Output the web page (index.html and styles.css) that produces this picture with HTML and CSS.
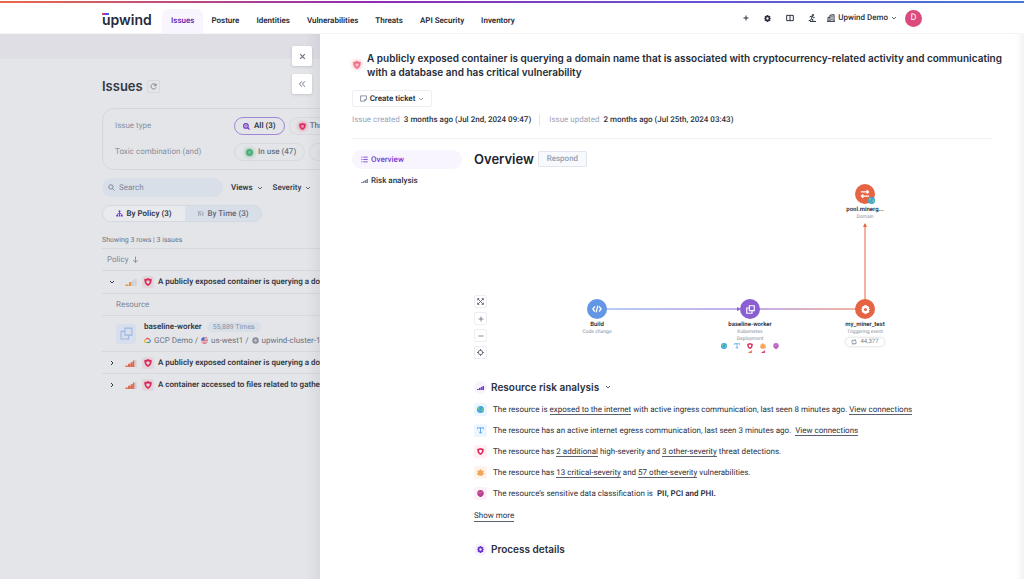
FILE: index.html
```html
<!DOCTYPE html>
<html lang="en">
<head>
<meta charset="utf-8">
<meta name="viewport" content="width=device-width, initial-scale=1">
<title>Upwind – Issues</title>
<link rel="stylesheet" href="styles.css">
</head>
<body>
<svg class="sprite" aria-hidden="true">
  <symbol id="chevron-down" viewBox="0 0 12 12"><path d="M2 4l4 4 4-4" class="line"/></symbol>
  <symbol id="chevron-right" viewBox="0 0 12 12"><path d="M4 2l4 4-4 4" class="line"/></symbol>
  <symbol id="chevrons-left" viewBox="0 0 12 12"><path d="M6 2L2 6l4 4M10.500 2l-4 4 4 4" class="line"/></symbol>
  <symbol id="close" viewBox="0 0 12 12"><path d="M2 2l8 8M10 2l-8 8" class="line"/></symbol>
  <symbol id="plus" viewBox="0 0 12 12"><path d="M6 1v10M1 6h10" class="line"/></symbol>
  <symbol id="minus" viewBox="0 0 12 12"><path d="M1 6h10" class="line"/></symbol>
  <symbol id="refresh" viewBox="0 0 12 12"><path d="M10 3.500A4.500 4.500 0 1 0 10.400 7.500M10.500 1v3.500H7" class="line"/></symbol>
  <symbol id="cycle" viewBox="0 0 12 12"><path d="M2 7.500V2.500h7M10 4.500v5H3M7.500 1l2 1.500-2 1.500M4.500 8l-2 1.500 2 1.500" class="line"/></symbol>
  <symbol id="gear" viewBox="0 0 12 12"><path fill="currentColor" fill-rule="evenodd" d="M4.700 0h2.600l.4 1.700 1.600-.5L11.200 3.200 10.300 4.600 12 6l-1.700 1.400.9 1.500-1.900 2-1.600-.6L7.300 12H4.700l-.4-1.700-1.600.5L.8 8.800l.9-1.400L0 6l1.700-1.400L.8 3.200l1.900-2 1.600.5zM6 4a2 2 0 1 0 0 4 2 2 0 0 0 0-4z"/></symbol>
  <symbol id="book" viewBox="0 0 12 12"><path d="M1 2h10v8H1zM6 2v8" class="line"/></symbol>
  <symbol id="runner" viewBox="0 0 12 12"><circle cx="7.500" cy="1.500" r="1.500" fill="currentColor"/><path d="M2.500 4.500l2-1.200h2.500l1 2.200h2M6.500 3.500L5 7l2.500 1.500L7 11M5 7l-1 2.500L1 10M3 11.200h9" class="line"/></symbol>
  <symbol id="building" viewBox="0 0 12 12"><path d="M4.500 11V1.800L10.500 1v10M1.500 11V5h3M0 11h12M6.500 3.500h2M6.500 6h2M6.500 8.500h2" class="line"/></symbol>
  <symbol id="shield" viewBox="0 0 12 12"><path fill="currentColor" fill-rule="evenodd" d="M6 0C7.700 1.100 9.600 1.400 11.500 1.300 11.900 6 10.500 10 6 12 1.500 10 .1 6 .5 1.300 2.400 1.400 4.300 1.100 6 0zM3.400 4C3.300 6.600 4.200 8 6 9c1.800-1 2.700-2.400 2.600-5C7.700 4 6.900 3.700 6 3.200 5.100 3.700 4.300 4 3.400 4z"/></symbol>
  <symbol id="note" viewBox="0 0 12 12"><path d="M1 1.500h10v6L8 10.500H1zM11 7.500H8v3" class="line"/></symbol>
  <symbol id="list" viewBox="0 0 12 12"><path d="M.5 2h2M4 2h7.500M.5 6h2M4 6h7.500M.5 10h2M4 10h7.500" class="line"/></symbol>
  <symbol id="bars" viewBox="0 0 14 10"><path fill="currentColor" d="M0 8h3v2H0zM3.700 6h3v4h-3zM7.400 4h3v6h-3zM11 2h3v8h-3z"/></symbol>
  <symbol id="signal-high" viewBox="0 0 14 10"><path fill="currentColor" d="M0 8h3v2H0zM3.300 6h3v4h-3zM6.600 4h2.500v6H6.600zM9.300 2h2v8h-2z"/><path fill="#cdd0d8" d="M11.800 1H14v9h-2.200z"/></symbol>
  <symbol id="signal-mid" viewBox="0 0 14 10"><path fill="currentColor" d="M0 8h4v2H0zM4.500 5h3v5h-3z"/><path fill="#cdd0d8" d="M8.300 3H11v7H8.300zM11.600 1H14v9h-2.400z"/></symbol>
  <symbol id="search" viewBox="0 0 12 12"><circle cx="5" cy="5" r="3.700" class="line"/><path d="M8 8l3.300 3.300" class="line"/></symbol>
  <symbol id="search-all" viewBox="0 0 12 12"><circle cx="5" cy="5" r="3.900" class="line"/><path d="M8 8l3.300 3.300" class="line"/><circle cx="5" cy="5" r="1.400" fill="currentColor"/></symbol>
  <symbol id="ring" viewBox="0 0 12 12"><circle cx="6" cy="6" r="4" fill="none" stroke="currentColor" stroke-width="4"/></symbol>
  <symbol id="tree" viewBox="0 0 12 12"><path d="M6 2v7M2 9V7.500L6 5l4 2.500V9" class="line"/><circle cx="6" cy="2.200" r="1.700" fill="currentColor"/><path fill="currentColor" d="M.5 8.500h3V11h-3zM4.700 8.500h2.600V11H4.700zM8.500 8.500h3V11h-3z"/></symbol>
  <symbol id="time" viewBox="0 0 12 12"><path d="M1 2l2 2v6M5 1.500v4l2 4M8 2l2 2v6" class="line"/></symbol>
  <symbol id="arrow-down" viewBox="0 0 12 12"><path d="M6 1v10M2 7l4 4 4-4" class="line"/></symbol>
  <symbol id="copies" viewBox="0 0 12 12"><path d="M4.500 1h6.500v6.500H4.500zM4.500 4H1v7h7V7.500" class="line"/></symbol>
  <symbol id="cloud" viewBox="0 0 14 12"><g fill="none" stroke-width="2.400"><path d="M3.500 4.200C4.500 1 9 .8 10.500 4" stroke="#e5574b"/><path d="M10.500 4c3 1.300 2.800 6 -.5 6" stroke="#4a80e8"/><path d="M10 10H5" stroke="#3fa762"/><path d="M5 10C.6 10.500 0 5.500 3.500 4.200" stroke="#eab32c"/></g></symbol>
  <symbol id="flag" viewBox="0 0 12 12"><circle cx="6" cy="6" r="6" fill="#eee3ea"/><path d="M6 1h4.500M6 3.600h5.800M1 6.200h11M.8 8.800h10.500M3 11h6" stroke="#dc5466" stroke-width="1.300"/><path d="M6 0v6H0a6 6 0 0 1 6-6z" fill="#4a72c8"/></symbol>
  <symbol id="cluster" viewBox="0 0 12 12"><circle cx="6" cy="6" r="5.500" fill="#828997"/><path d="M6 2v8M2 6h8M3.200 3.200l5.600 5.600M8.800 3.200L3.200 8.800" stroke="#dfe1e6" stroke-width=".7"/></symbol>
  <symbol id="globe" viewBox="0 0 12 12"><circle cx="6" cy="6" r="6" fill="#3ba0e6"/><path fill="#6cc794" d="M1.500 2.500L5 .8l1.500 2-2 1.500-.5 2.500L1 5.500zM7.500 4.500l3.500-1 .8 3-2.300 3.500-2-1.500zM3 8.500l2.500-.8.5 3-1.500.5z"/></symbol>
  <symbol id="egress" viewBox="0 0 12 12"><path d="M.8 3.800V1.400h10.400v2.400M6 1.400v9M3.500 8.200L6 10.800l2.500-2.600" class="line"/></symbol>
  <symbol id="bug" viewBox="0 0 12 12"><path fill="currentColor" d="M4 2.800a2 2.300 0 0 1 4 0l3.500 0v2l-1 .6v1.600h1.200v3H10L8.500 11.500h-5L2 10H.3V7h1.200V5.400l-1-.6v-2z"/></symbol>
  <symbol id="fingerprint" viewBox="0 0 12 12"><circle cx="6" cy="5.500" r="5.500" fill="currentColor"/><path fill="currentColor" d="M4 10h4v2H4z"/><path d="M6 5.500l3.500-3.500M6 5.500L2.500 4" stroke="#fff" stroke-opacity=".45"/></symbol>
  <symbol id="code" viewBox="0 0 12 12"><path d="M3.500 3L1 6l2.500 3M8.500 3L11 6 8.500 9M7 2L5 10" class="line"/></symbol>
  <symbol id="swap" viewBox="0 0 12 12"><path d="M1 3.500h9M8 1.500l2.300 2L8 5.500M11 8.500H2M4 6.500l-2.300 2 2.300 2" class="line"/></symbol>
  <symbol id="expand" viewBox="0 0 12 12"><path d="M1.500 1.500l9 9M10.500 1.500l-9 9M1 4V1h3M8 1h3v3M11 8v3H8M4 11H1V8" class="line"/></symbol>
  <symbol id="target" viewBox="0 0 12 12"><circle cx="6" cy="6" r="3.800" class="line"/><path d="M6 0v3M6 9v3M0 6h3M9 6h3" class="line"/></symbol>
</svg>

<header class="topbar">
  <a class="logo" href="#" aria-label="upwind"><span class="logo-bar"></span>upwind</a>
  <nav class="nav" aria-label="Main">
    <a class="nav-link active" href="#">Issues</a>
    <a class="nav-link" href="#">Posture</a>
    <a class="nav-link" href="#">Identities</a>
    <a class="nav-link" href="#">Vulnerabilities</a>
    <a class="nav-link" href="#">Threats</a>
    <a class="nav-link" href="#">API Security</a>
    <a class="nav-link" href="#">Inventory</a>
  </nav>
  <div class="tools">
    <button class="tool" aria-label="Add"><svg class="i6 bold"><use href="#plus"/></svg></button>
    <button class="tool" aria-label="Settings"><svg class="i7"><use href="#gear"/></svg></button>
    <button class="tool" aria-label="Documentation"><svg class="i8"><use href="#book"/></svg></button>
    <button class="tool" aria-label="Getting started"><svg class="i8"><use href="#runner"/></svg></button>
    <button class="org"><svg class="i8"><use href="#building"/></svg>Upwind Demo<svg class="i6"><use href="#chevron-down"/></svg></button>
    <button class="avatar" aria-label="Account">D</button>
  </div>
</header>

<main class="workspace">
  <section class="backdrop">
    <div class="band"></div>
    <div class="drawer-actions">
      <button class="square" aria-label="Close"><svg class="i7 bold"><use href="#close"/></svg></button>
      <button class="square" aria-label="Expand"><svg class="i8"><use href="#chevrons-left"/></svg></button>
    </div>
    <div class="issues">
      <div class="issues-head">
        <h1>Issues</h1>
        <button class="reload" aria-label="Refresh"><svg class="i7"><use href="#refresh"/></svg></button>
      </div>
      <div class="filters">
        <div class="filter-row">
          <span class="filter-name">Issue type</span>
          <button class="pill selected"><svg class="i7 violet bold"><use href="#search-all"/></svg>All (3)</button>
          <button class="pill"><svg class="i7 red halo"><use href="#shield"/></svg>Threats</button>
        </div>
        <div class="filter-row">
          <span class="filter-name">Toxic combination (and)</span>
          <button class="pill"><svg class="i7 green halo"><use href="#ring"/></svg>In use (47)</button>
          <button class="pill" aria-label="Exposed"><svg class="i7 peach halo"><use href="#ring"/></svg></button>
        </div>
      </div>
      <div class="search-row">
        <label class="search"><svg class="i7"><use href="#search"/></svg><input type="search" placeholder="Search" aria-label="Search"></label>
        <button class="drop strong">Views<svg class="i6"><use href="#chevron-down"/></svg></button>
        <button class="drop">Severity<svg class="i6"><use href="#chevron-down"/></svg></button>
      </div>
      <div class="segments">
        <button class="segment on"><svg class="i7 violet"><use href="#tree"/></svg>By Policy (3)</button>
        <button class="segment"><svg class="i7 grey"><use href="#time"/></svg>By Time (3)</button>
      </div>
      <p class="summary">Showing 3 rows | 3 issues</p>
      <div class="policies">
        <div class="policy-head">Policy<svg class="i7"><use href="#arrow-down"/></svg></div>
        <div class="policy open">
          <svg class="i6 bold"><use href="#chevron-down"/></svg><svg class="signal amber"><use href="#signal-mid"/></svg>
          <span class="badge"><svg class="i8 red"><use href="#shield"/></svg></span>A publicly exposed container is querying a domain
        </div>
        <div class="resource-head">Resource</div>
        <div class="resource">
          <span class="resource-icon"><svg class="i13"><use href="#copies"/></svg></span>
          <div class="resource-text">
            <div class="resource-name">baseline-worker<span class="times">55,889 Times</span></div>
            <div class="path"><svg class="i7"><use href="#cloud"/></svg>GCP Demo /<svg class="i7"><use href="#flag"/></svg>us-west1 /<svg class="i7"><use href="#cluster"/></svg>upwind-cluster-1</div>
          </div>
        </div>
        <div class="policy">
          <svg class="i6 bold"><use href="#chevron-right"/></svg><svg class="signal rust"><use href="#signal-high"/></svg>
          <span class="badge"><svg class="i8 red"><use href="#shield"/></svg></span>A publicly exposed container is querying a domain
        </div>
        <div class="policy">
          <svg class="i6 bold"><use href="#chevron-right"/></svg><svg class="signal rust"><use href="#signal-high"/></svg>
          <span class="badge"><svg class="i8 red"><use href="#shield"/></svg></span>A container accessed to files related to gathering
        </div>
      </div>
    </div>
  </section>

  <section class="drawer">
    <div class="drawer-title">
      <svg class="i8 rose halo"><use href="#shield"/></svg>
      <h2>A publicly exposed container is querying a domain name that is associated with cryptocurrency-related activity and communicating with a database and has critical vulnerability</h2>
    </div>
    <button class="ticket"><svg class="i7 slate"><use href="#note"/></svg>Create ticket<svg class="i6 slate"><use href="#chevron-down"/></svg></button>
    <dl class="dates">
      <div><dt>Issue created</dt><dd>3 months ago (Jul 2nd, 2024 09:47)</dd></div>
      <div><dt>Issue updated</dt><dd>2 months ago (Jul 25th, 2024 03:43)</dd></div>
    </dl>
    <div class="detail">
      <nav class="side" aria-label="Issue sections">
        <a class="side-link current" href="#"><svg class="i7"><use href="#list"/></svg>Overview</a>
        <a class="side-link" href="#"><svg class="mini-bars slate"><use href="#bars"/></svg>Risk analysis</a>
      </nav>
      <div class="content">
        <div class="overview-head"><h3>Overview</h3><button class="respond">Respond</button></div>
        <div class="graph">
          <svg class="edges" viewBox="0 0 518 200">
            <defs>
              <linearGradient id="e1" gradientUnits="userSpaceOnUse" x1="130" y1="0" x2="268" y2="0"><stop offset="0" stop-color="#6f9be8"/><stop offset="1" stop-color="#8a5fd3"/></linearGradient>
              <linearGradient id="e2" gradientUnits="userSpaceOnUse" x1="284" y1="0" x2="384" y2="0"><stop offset="0" stop-color="#8a5fd3"/><stop offset="1" stop-color="#e8683f"/></linearGradient>
            </defs>
            <path d="M123 135h142" stroke="url(#e1)"/><path d="M263 133l4 2-4 2z" fill="#8a5fd3"/>
            <path d="M276 135h115" stroke="url(#e2)"/>
            <path d="M391 135V50" stroke="#e8683f"/><path d="M389 53l2-4 2 4z" fill="#e8683f"/>
          </svg>
          <div class="zoomers">
            <button aria-label="Full screen"><svg class="i7"><use href="#expand"/></svg></button>
            <button aria-label="Zoom in"><svg class="i6"><use href="#plus"/></svg></button>
            <button aria-label="Zoom out"><svg class="i6"><use href="#minus"/></svg></button>
            <button aria-label="Center"><svg class="i7"><use href="#target"/></svg></button>
          </div>
          <div class="node node-build"><span class="disc blue"><svg class="i10"><use href="#code"/></svg></span><b>Build</b><span class="node-kind">Code change</span></div>
          <div class="node node-worker"><span class="disc purple"><svg class="i9"><use href="#copies"/></svg></span><b>baseline-worker</b><span class="node-kind">Kubernetes<br>Deployment</span>
            <span class="risks">
              <svg class="i6"><use href="#globe"/></svg>
              <svg class="i6 sky"><use href="#egress"/></svg>
              <span><svg class="i6 red"><use href="#shield"/></svg><svg class="level rust"><use href="#bars"/></svg></span>
              <span><svg class="i6 orange"><use href="#bug"/></svg><svg class="level red"><use href="#bars"/></svg></span>
              <svg class="i6 orchid"><use href="#fingerprint"/></svg>
            </span>
          </div>
          <div class="node node-miner"><span class="disc coral"><svg class="i9"><use href="#gear"/></svg></span><b>my_miner_test</b><span class="node-kind">Triggering event</span><span class="count"><svg class="i6"><use href="#cycle"/></svg>44,377</span></div>
          <div class="node node-pool"><span class="disc coral"><svg class="i10"><use href="#swap"/></svg><svg class="i7 corner"><use href="#globe"/></svg></span><b>pool.minerg...</b><span class="node-kind">Domain</span></div>
        </div>
        <h4><span class="round"><svg class="mini-bars violet"><use href="#bars"/></svg></span>Resource risk analysis<svg class="i6"><use href="#chevron-down"/></svg></h4>
        <ul class="risk-list">
          <li><span class="tile tile-sky"><svg class="i7"><use href="#globe"/></svg></span><p>The resource is <a href="#">exposed to the internet</a> with active ingress communication, last seen 8 minutes ago. <a href="#">View connections</a></p></li>
          <li><span class="tile tile-sky"><svg class="i7 sky"><use href="#egress"/></svg></span><p>The resource has an active internet egress communication, last seen 3 minutes ago.&nbsp; <a href="#">View connections</a></p></li>
          <li><span class="tile tile-red"><svg class="i7 red"><use href="#shield"/></svg></span><p>The resource has <a href="#">2 additional</a> high-severity and <a href="#">3 other-severity</a> threat detections.</p></li>
          <li><span class="tile tile-orange"><svg class="i7 orange"><use href="#bug"/></svg></span><p>The resource has <a href="#">13 critical-severity</a> and <a href="#">57 other-severity</a> vulnerabilities.</p></li>
          <li><span class="tile tile-pink"><svg class="i7 magenta"><use href="#fingerprint"/></svg></span><p>The resource’s sensitive data classification is <b>PII, PCI and PHI.</b></p></li>
        </ul>
        <a class="more" href="#">Show more</a>
        <h4 class="process"><span class="round"><svg class="i7 violet"><use href="#gear"/></svg></span>Process details</h4>
      </div>
    </div>
  </section>
</main>
</body>
</html>
```
FILE: styles.css
```css
* { box-sizing: border-box; }
body {
  margin: 0;
  min-height: 100vh;
  display: flex;
  flex-direction: column;
  font: 8px/12px Roboto, "Liberation Sans", sans-serif;
  text-rendering: geometricPrecision;
  color: #2b3140;
  background: #fff;
  overflow: hidden;
}
button, input { font: inherit; color: inherit; text-rendering: inherit; }
button { padding: 0; border: 0; background: none; display: flex; align-items: center; justify-content: center; white-space: nowrap; }
a { color: inherit; text-decoration: none; }
h1, h2, h3, h4, p, ul, dl, dd { margin: 0; padding: 0; }
h1, h2, h3, h4, .logo { font-family: Inter, "Liberation Sans", sans-serif; text-rendering: auto; }
svg { display: block; flex: none; }
.sprite { position: absolute; width: 0; height: 0; }
.line { fill: none; stroke: currentColor; stroke-width: var(--stroke, 1.5); }
.bold { --stroke: 2; }

.i6 { width: 6px; height: 6px; }
.i7 { width: 7px; height: 7px; }
.i8 { width: 8px; height: 8px; }
.i9 { width: 9px; height: 9px; }
.i10 { width: 10px; height: 10px; }
.i13 { width: 13px; height: 13px; --stroke: 1; }
.mini-bars { width: 7px; height: 5px; }
.violet { color: #6f35cf; }
.red { color: #dc2a5c; }
.rose { color: #f07088; }
.green { color: #4fae7c; }
.peach { color: #e3c3b8; }
.grey { color: #8b92a1; }
.slate { color: #7d879b; }
.amber { color: #e79443; }
.rust { color: #e0664a; }
.sky { color: #4f9ff0; }
.orange { color: #f5a55a; }
.orchid { color: #bd62c4; }
.magenta { color: #b9418e; }
.halo { overflow: visible; filter: drop-shadow(0 0 2px currentColor); }

/* Top bar */
.topbar {
  height: 34px;
  padding: 4px 102px 0;
  display: flex;
  align-items: stretch;
  background: linear-gradient(90deg, #ea6a48, #8f2bb4 36%, #6a4fd6 66%, #4378e0) 0 1px / 100% 2px no-repeat #fff;
  border-bottom: 1px solid #f4f4f7;
}
.logo { position: relative; width: 60px; font-size: 14px; line-height: 32px; font-weight: 600; color: #262a3c; }
.logo-bar { position: absolute; left: 0; top: 9px; width: 7px; height: 2px; background: linear-gradient(90deg, #e8484a, #6a3be0, #3b6cf0); }
.nav { display: flex; font-weight: 600; color: #262b38; }
.nav-link { padding: 11px 9px 0 8px; }
.nav-link.active { padding: 6px 9px 0; color: #6a2bb0; background: #f8f5fe; border-radius: 6px 6px 0 0; margin-top: 5px; }
.tools { margin-left: auto; display: flex; align-items: center; gap: 15px; padding-bottom: 1px; }
.tool { width: 7px; }
.org { gap: 3px; font-weight: 500; margin-left: -3px; }
.avatar { width: 17px; height: 17px; margin-left: -7px; border-radius: 50%; background: #dc4a7b; color: #fff; font-size: 9px; }

/* Issues page behind the drawer */
.workspace { flex: 1; display: grid; grid-template-columns: 5fr 11fr; }
.backdrop { position: relative; overflow: hidden; background: #e4e5e8; color: #333946; white-space: nowrap; }
.backdrop::after { content: ""; position: absolute; inset: 0 0 0 auto; width: 14px; background: linear-gradient(90deg, transparent, rgba(60, 65, 85, .07)); }
.band { height: 25px; background: #dfdee5; }
.drawer-actions { position: absolute; right: 8px; top: 12px; display: grid; gap: 8px; z-index: 1; }
.square { width: 20px; height: 20px; border-radius: 2px; background: #fff; color: #697184; box-shadow: 0 1px 3px rgba(40, 45, 70, .16); }
.issues { padding: 18px 0 0 102px; }
.issues-head { display: flex; align-items: center; gap: 4px; height: 18px; }
h1 { font-size: 13px; line-height: 18px; font-weight: 600; }
.reload { width: 13px; height: 13px; border: 1px solid #d6d9df; border-radius: 2px; color: #737b8b; }
.filters { width: 400px; margin-top: 13px; padding: 8px 12px; border: 1px solid #d4d7de; border-radius: 12px; display: grid; gap: 8px; }
.filter-row { display: flex; align-items: center; gap: 4px; height: 18px; }
.filter-name { width: 115px; color: #8790a3; }
.pill { height: 18px; padding: 0 9px; gap: 4px; border: 1px solid #d6d9df; border-radius: 9px; color: #697183; font-weight: 500; }
.filter-row:last-child .pill { padding: 0 8px 0 11px; gap: 5px; }
.pill.selected { padding: 0 8px; border-color: #a087d6; color: #333946; font-weight: 600; }
.search-row { display: flex; align-items: center; margin-top: 8px; }
.search { width: 121px; height: 19px; padding: 0 6px; gap: 4px; display: flex; align-items: center; border-radius: 10px; background: #d9dfe8; color: #737b8b; }
.search input { min-width: 0; flex: 1; padding: 0; border: 0; outline: 0; background: none; }
.search input::placeholder { color: #7d8697; opacity: 1; }
.drop { gap: 4px; margin-left: 8px; font-weight: 500; }
.drop + .drop { margin-left: 10px; }
.drop.strong { font-weight: 600; }
.segments { display: flex; width: 160px; height: 17px; margin-top: 8px; border: 1px solid #d3d8e1; border-radius: 9px; overflow: hidden; background: #d9dfe8; }
.segment { flex: 1; gap: 3px; color: #5f6778; font-weight: 500; }
.segment.on { flex: 0 0 82px; background: #e9eaed; color: #333946; font-weight: 600; }
.summary { margin-top: 12px; font-size: 7px; color: #6b7383; }
.policies { margin-top: 2px; }
.policy-head, .policy, .resource-head, .resource { display: flex; align-items: center; border-top: 1px solid #d6d8de; }
.policy-head { height: 22px; padding-left: 5px; gap: 4px; color: #7f8798; }
.policy { height: 22px; padding-left: 7px; font-weight: 600; }
.policy.open { height: 23px; }
.signal { width: 12px; height: 8px; margin: 0 5px 0 10px; }
.badge { flex: none; width: 12px; height: 12px; margin-right: 4px; display: grid; place-items: center; border-radius: 2px; background: #e2d5dc; }
.resource-head { height: 22px; padding-left: 14px; color: #7f8798; }
.resource { height: 36px; padding-left: 14px; gap: 8px; }
.resource-icon { flex: none; width: 20px; height: 20px; display: grid; place-items: center; border-radius: 3px; background: #d7dfec; color: #9db6e2; }
.resource-text { display: grid; gap: 2px; }
.resource-name { display: flex; align-items: center; gap: 5px; font-weight: 600; }
.times { padding: 0 6px; line-height: 10px; border-radius: 5px; background: #d9dfe8; color: #8790a3; font-size: 7px; font-weight: 400; }
.path { display: flex; align-items: center; gap: 3px; color: #697183; }

/* Drawer */
.drawer { padding: 17px 32px 0; background: #fff; box-shadow: inset -10px 0 8px -8px rgba(60, 65, 85, .1); }
.drawer-title { display: flex; align-items: center; gap: 6px; margin-right: -12px; padding-left: 1px; }
h2 { font-size: 10px; line-height: 14px; font-weight: 600; color: #262b38; }
.ticket { width: 80px; height: 17px; margin-top: 11px; gap: 3px; border: 1px solid #eeeff2; border-radius: 2px; font-weight: 600; }
.dates { display: flex; margin-top: 7px; padding-bottom: 12px; border-bottom: 1px solid #f1f2f5; }
.dates div { display: flex; gap: 4px; }
.dates div + div { margin-left: 8px; padding-left: 9px; border-left: 1px solid #e3e6ec; }
dt { color: #9aa4b8; }
dd { font-weight: 500; }
.detail { display: grid; grid-template-columns: 110px minmax(0, 1fr); column-gap: 12px; padding-top: 11px; }
.side { display: grid; gap: 2px; align-content: start; font-weight: 500; }
.side-link { display: flex; align-items: center; gap: 3px; height: 19px; padding-left: 9px; border-radius: 10px; }
.current { background: #f8f5fe; color: #7440cf; }
.overview-head { display: flex; align-items: center; gap: 4px; height: 18px; }
h3 { font-size: 13px; line-height: 18px; font-weight: 600; color: #20242f; }
.respond { width: 49px; height: 16px; border: 1px solid #e1e6ee; border-radius: 2px; background: #f7f9fc; color: #94a0b5; font-weight: 500; }
.graph { position: relative; height: 206px; margin-top: 6px; }
.edges { position: absolute; left: 0; top: 0; width: 518px; height: 200px; }
.zoomers { position: absolute; left: 0; top: 121px; display: grid; gap: 4px; }
.zoomers button { width: 13px; height: 13px; border: 1px solid #eceef2; border-radius: 2px; color: #5c6475; }
.node { position: absolute; width: 80px; margin-left: -40px; display: flex; flex-direction: column; align-items: center; font-size: 6px; line-height: 8px; }
.node b { margin-top: 2px; font-weight: 600; }
.node-kind { font-size: 5px; line-height: 7px; text-align: center; color: #8a93a5; }
.node-build { left: 123px; top: 125px; }
.node-worker { left: 276px; top: 125px; }
.node-miner { left: 391px; top: 125px; }
.node-pool { left: 391px; top: 10px; }
.disc { position: relative; width: 20px; height: 20px; display: grid; place-items: center; border-radius: 50%; color: #fff; }
.blue { background: #6496e6; }
.purple { background: #8a5fd3; }
.coral { background: #e46444; }
.corner { position: absolute; right: 0; bottom: 0; }
.risks { display: flex; gap: 7px; }
.risks span { display: grid; gap: 1px; }
.level { width: 6px; height: 3px; }
.count { display: flex; align-items: center; gap: 3px; margin-top: 2px; padding: 0 5px; border-radius: 5px; box-shadow: 0 0 3px rgba(40, 45, 70, .25); font-size: 6px; color: #737b8b; }
h4 { display: flex; align-items: center; gap: 4px; font-size: 10px; line-height: 14px; font-weight: 600; }
h4 > svg { margin-left: 2px; }
.round { width: 13px; height: 13px; display: grid; place-items: center; border-radius: 50%; background: #f7f3fd; }
.risk-list { list-style: none; margin-top: 9px; display: grid; gap: 8px; }
.risk-list li { display: flex; align-items: center; gap: 6px; }
.risk-list a, .more { border-bottom: 1px solid #5b6170; }
.risk-list b { margin-left: 2px; font-weight: 600; }
.tile { width: 13px; height: 13px; display: grid; place-items: center; border-radius: 2px; }
.tile-sky { background: #edf6fe; }
.tile-red { background: #fdeff2; }
.tile-orange { background: #fef4ec; }
.tile-pink { background: #fdf0f8; }
.more { display: inline-block; margin-top: 11px; line-height: 10px; }
.process { margin-top: 20px; }
```
